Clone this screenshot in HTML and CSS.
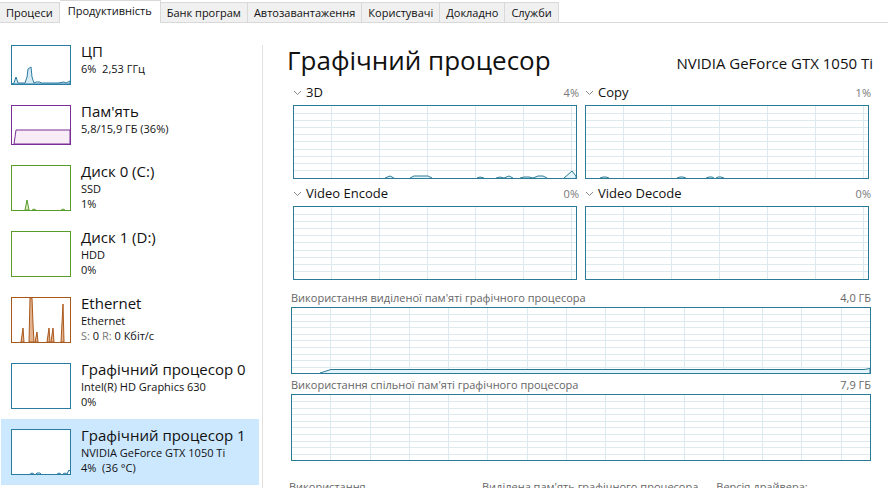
FILE: index.html
```html
<!DOCTYPE html>
<html lang="uk">
<head>
    <meta charset="UTF-8">
    <meta name="viewport" content="width=device-width, initial-scale=1.0">
    <title>Диспетчер завдань</title>
    <link rel="stylesheet" href="styles.css">
</head>
<body>
    <div class="window">
        <nav class="tabs">
            <button class="tab">Процеси</button>
            <button class="tab active">Продуктивність</button>
            <button class="tab">Банк програм</button>
            <button class="tab">Автозавантаження</button>
            <button class="tab">Користувачі</button>
            <button class="tab">Докладно</button>
            <button class="tab">Служби</button>
        </nav>

        <div class="content">
            <aside class="sidebar">
                <button class="item">
                    <svg class="thumb short blue" viewBox="0 0 58 38" preserveAspectRatio="none">
                        <path d="M0 38 L2 37 L4 31 L6 37 L13 37 L15 31 L16 23 L19 21 L20 31 L22 37 L24 36 L28 36 L29 37 L37 37 L46 37 L52 36 L54 37 L58 35 V38 Z"/>
                    </svg>
                    <span class="info">
                        <span class="name">ЦП</span>
                        <span>6%&nbsp; 2,53 ГГц</span>
                    </span>
                </button>
                <button class="item">
                    <svg class="thumb short purple" viewBox="0 0 58 38" preserveAspectRatio="none">
                        <path d="M2 38 L4 24 H58 V38 Z"/>
                    </svg>
                    <span class="info">
                        <span class="name">Пам'ять</span>
                        <span>5,8/15,9 ГБ (36%)</span>
                    </span>
                </button>
                <button class="item">
                    <svg class="thumb green" viewBox="0 0 58 44" preserveAspectRatio="none">
                        <path d="M13 44 L15 34 L17 44 Z M20 44 L22 43 L24 44 M49 44 L51 43 L53 44"/>
                    </svg>
                    <span class="info">
                        <span class="name">Диск 0 (C:)</span>
                        <span>SSD</span>
                        <span>1%</span>
                    </span>
                </button>
                <button class="item">
                    <svg class="thumb green" viewBox="0 0 58 44" preserveAspectRatio="none"></svg>
                    <span class="info">
                        <span class="name">Диск 1 (D:)</span>
                        <span>HDD</span>
                        <span>0%</span>
                    </span>
                </button>
                <button class="item">
                    <svg class="thumb orange" viewBox="0 0 58 44" preserveAspectRatio="none">
                        <path d="M9 44 L11 30 L12 44 Z M17 44 L18 0 H20 L21 26 L22 44 Z M23 44 L25 34 L26 44 Z M35 44 L37 30 L38 44 Z M39 44 L41 30 L42 44 Z M49 44 L51 6 L52 44 Z"/>
                    </svg>
                    <span class="info">
                        <span class="name">Ethernet</span>
                        <span>Ethernet</span>
                        <span><span class="muted">S:</span> 0 <span class="muted">R:</span> 0 Кбіт/с</span>
                    </span>
                </button>
                <button class="item">
                    <svg class="thumb blue" viewBox="0 0 58 44" preserveAspectRatio="none"></svg>
                    <span class="info">
                        <span class="name">Графічний процесор 0</span>
                        <span>Intel(R) HD Graphics 630</span>
                        <span>0%</span>
                    </span>
                </button>
                <button class="item selected">
                    <svg class="thumb blue" viewBox="0 0 58 44" preserveAspectRatio="none">
                        <path d="M18 44 L20 43 L22 44 M24 44 L25 43 H28 L29 44 M45 44 L47 43 L49 44 M51 44 L53 43 L55 44 L57 40 L58 41"/>
                    </svg>
                    <span class="info">
                        <span class="name">Графічний процесор 1</span>
                        <span>NVIDIA GeForce GTX 1050 Ti</span>
                        <span>4%&nbsp; (36 °C)</span>
                    </span>
                </button>
            </aside>

            <main class="details">
                <header class="title">
                    <h1>Графічний процесор</h1>
                    <span class="model">NVIDIA GeForce GTX 1050 Ti</span>
                </header>

                <div class="engines">
                    <section>
                        <div class="engine-head">
                            <button class="engine">
                                <svg class="arrow" viewBox="0 0 9 6"><path d="M1 1 L4.5 4.5 L8 1"/></svg>3D
                            </button>
                            <span>4%</span>
                        </div>
                        <svg class="chart" viewBox="0 0 282 72" preserveAspectRatio="none">
                            <path class="grid" d="M37.5 0V72M85.5 0V72M133.5 0V72M181.5 0V72M229.5 0V72M277.5 0V72M0 7.5H282M0 14.5H282M0 21.5H282M0 28.5H282M0 35.5H282M0 43.5H282M0 50.5H282M0 57.5H282M0 64.5H282"/>
                            <path class="line" d="M91 72 L96 70 L100 72 M116 72 L120 70 H134 L138 72 M183 72 L186 71 L190 72 M202 72 L206 71 L210 72 L215 70 L219 72 M226 72 L230 71 H235 L239 72 L244 70 H249 L253 72 M270 72 L278 65 L282 70 V72"/>
                        </svg>
                    </section>
                    <section>
                        <div class="engine-head">
                            <button class="engine">
                                <svg class="arrow" viewBox="0 0 9 6"><path d="M1 1 L4.5 4.5 L8 1"/></svg>Copy
                            </button>
                            <span>1%</span>
                        </div>
                        <svg class="chart" viewBox="0 0 282 72" preserveAspectRatio="none">
                            <path class="grid" d="M37.5 0V72M85.5 0V72M133.5 0V72M181.5 0V72M229.5 0V72M277.5 0V72M0 7.5H282M0 14.5H282M0 21.5H282M0 28.5H282M0 35.5H282M0 43.5H282M0 50.5H282M0 57.5H282M0 64.5H282"/>
                            <path class="line" d="M14 72 L17 71 H20 L23 72 M91 72 L94 71 H97 L100 72 M120 72 L123 71 H126 L128 72 M130 72 L132 71 H135 L138 72"/>
                        </svg>
                    </section>
                    <section>
                        <div class="engine-head">
                            <button class="engine">
                                <svg class="arrow" viewBox="0 0 9 6"><path d="M1 1 L4.5 4.5 L8 1"/></svg>Video Encode
                            </button>
                            <span>0%</span>
                        </div>
                        <svg class="chart" viewBox="0 0 282 72" preserveAspectRatio="none">
                            <path class="grid" d="M37.5 0V72M85.5 0V72M133.5 0V72M181.5 0V72M229.5 0V72M277.5 0V72M0 7.5H282M0 14.5H282M0 21.5H282M0 28.5H282M0 35.5H282M0 43.5H282M0 50.5H282M0 57.5H282M0 64.5H282"/>
                        </svg>
                    </section>
                    <section>
                        <div class="engine-head">
                            <button class="engine">
                                <svg class="arrow" viewBox="0 0 9 6"><path d="M1 1 L4.5 4.5 L8 1"/></svg>Video Decode
                            </button>
                            <span>0%</span>
                        </div>
                        <svg class="chart" viewBox="0 0 282 72" preserveAspectRatio="none">
                            <path class="grid" d="M37.5 0V72M85.5 0V72M133.5 0V72M181.5 0V72M229.5 0V72M277.5 0V72M0 7.5H282M0 14.5H282M0 21.5H282M0 28.5H282M0 35.5H282M0 43.5H282M0 50.5H282M0 57.5H282M0 64.5H282"/>
                        </svg>
                    </section>
                </div>

                <div class="memory">
                    <div class="memory-head">
                        <span>Використання виділеної пам'яті графічного процесора</span>
                        <span>4,0 ГБ</span>
                    </div>
                    <svg class="chart low" viewBox="0 0 578 65" preserveAspectRatio="none">
                        <path class="grid" d="M38.5 0V65M78.5 0V65M117.5 0V65M156.5 0V65M195.5 0V65M235.5 0V65M274.5 0V65M313.5 0V65M352.5 0V65M392.5 0V65M431.5 0V65M470.5 0V65M509.5 0V65M549.5 0V65M0 6.5H578M0 13.5H578M0 19.5H578M0 26.5H578M0 32.5H578M0 39.5H578M0 46.5H578M0 52.5H578M0 59.5H578"/>
                        <path class="line" d="M28 65 L39 61.5 H572 L578 60.5 V65"/>
                    </svg>
                    <div class="memory-head">
                        <span>Використання спільної пам'яті графічного процесора</span>
                        <span>7,9 ГБ</span>
                    </div>
                    <svg class="chart low" viewBox="0 0 578 65" preserveAspectRatio="none">
                        <path class="grid" d="M38.5 0V65M78.5 0V65M117.5 0V65M156.5 0V65M195.5 0V65M235.5 0V65M274.5 0V65M313.5 0V65M352.5 0V65M392.5 0V65M431.5 0V65M470.5 0V65M509.5 0V65M549.5 0V65M0 6.5H578M0 13.5H578M0 19.5H578M0 26.5H578M0 32.5H578M0 39.5H578M0 46.5H578M0 52.5H578M0 59.5H578"/>
                    </svg>
                </div>

                <div class="stats">
                    <span>Використання</span>
                    <span>Виділена пам'ять графічного процесора</span>
                    <span>Версія драйвера:</span>
                </div>
            </main>
        </div>
    </div>
</body>
</html>
```

FILE: styles.css
```css
* {
    box-sizing: border-box;
}
body {
    margin: 0;
    background: #fff;
    color: #111;
    font-family: "Open Sans", "Noto Sans", sans-serif;
    font-size: 11px;
    line-height: 15px;
}
button {
    border: none;
    background: none;
    color: inherit;
    font: inherit;
    padding: 0;
    text-align: left;
    white-space: nowrap;
}
.window {
    display: flex;
    flex-direction: column;
    height: calc(100vh - 12px);
    overflow: hidden;
}

/* tabs */
.tabs {
    display: flex;
    flex: none;
    align-items: flex-end;
    height: 23px;
    border-bottom: 1px solid #d9d9d9;
}
.tab {
    height: 20px;
    padding: 0 6px;
    background: #f0f0f0;
    border-top: 1px solid #d9d9d9;
    border-right: 1px solid #d9d9d9;
}
.tab.active {
    height: 23px;
    padding: 0 8px 3px;
    margin-bottom: -1px;
    background: #fff;
}

.content {
    display: flex;
    flex: 1;
    min-height: 0;
    padding-top: 12px;
}

/* left list */
.sidebar {
    display: flex;
    flex: none;
    flex-direction: column;
    width: 259px;
    padding-left: 1px;
}
.item {
    display: flex;
    flex: none;
    gap: 10px;
    padding: 6px 10px 8px;
}
.item.selected {
    background: #cce8ff;
}
.thumb {
    flex: none;
    width: 60px;
    height: 46px;
    margin: 4px 0 2px;
    background: #fff;
    border: 1px solid;
}
.thumb.short {
    height: 40px;
}
.thumb path {
    stroke: currentColor;
    stroke-width: 1;
}
.blue {
    color: #2a7ca3;
    fill: #d5eaf3;
}
.purple {
    color: #7a2f96;
    fill: #f8edf6;
}
.green {
    color: #5a9c2c;
    fill: #d9efc8;
}
.orange {
    color: #a9581c;
    fill: #e3b48f;
}
.info {
    display: flex;
    flex-direction: column;
}
.name {
    font-size: 15px;
    line-height: 20px;
}
.muted {
    color: #777;
}

/* right side */
.details {
    flex: 1;
    min-width: 0;
    margin-left: 3px;
    padding: 0 15px 0 24px;
    border-left: 1px solid #e0e0e0;
    margin-top: 10px;
}
.title {
    display: flex;
    justify-content: space-between;
    align-items: center;
    height: 33px;
    padding-bottom: 3px;
    white-space: nowrap;
}
h1 {
    margin: 0;
    font-size: 26px;
    font-weight: 400;
    line-height: 30px;
}
.model {
    padding-top: 6px;
    font-size: 15px;
}
.engines {
    display: grid;
    grid-template-columns: 1fr 1fr;
    column-gap: 8px;
    margin: 0 4px 0 6px;
}
.engine-head {
    display: flex;
    justify-content: space-between;
    align-items: center;
    height: 27px;
    padding-top: 2px;
    margin-right: -2px;
    color: #777;
}
.engine {
    display: flex;
    align-items: center;
    gap: 4px;
    color: #111;
    font-size: 13px;
}
.arrow {
    width: 9px;
    height: 6px;
    fill: none;
    stroke: #888;
}
.chart {
    display: block;
    width: 100%;
    height: 74px;
    border: 1px solid #2b7a96;
}
.chart.low {
    height: 67px;
}
.chart path {
    vector-effect: non-scaling-stroke;
}
.grid {
    fill: none;
    stroke: #dce9ef;
}
.line {
    fill: #e3f4fa;
    stroke: #2b7a96;
}
.memory {
    margin: 7px 2px 0 4px;
}
.memory-head {
    display: flex;
    justify-content: space-between;
    align-items: center;
    height: 20px;
    color: #666;
}
.stats {
    display: flex;
    gap: 18px;
    margin: 18px 0 0 2px;
    color: #666;
    white-space: nowrap;
}
.stats span:first-child {
    width: 175px;
}
```
